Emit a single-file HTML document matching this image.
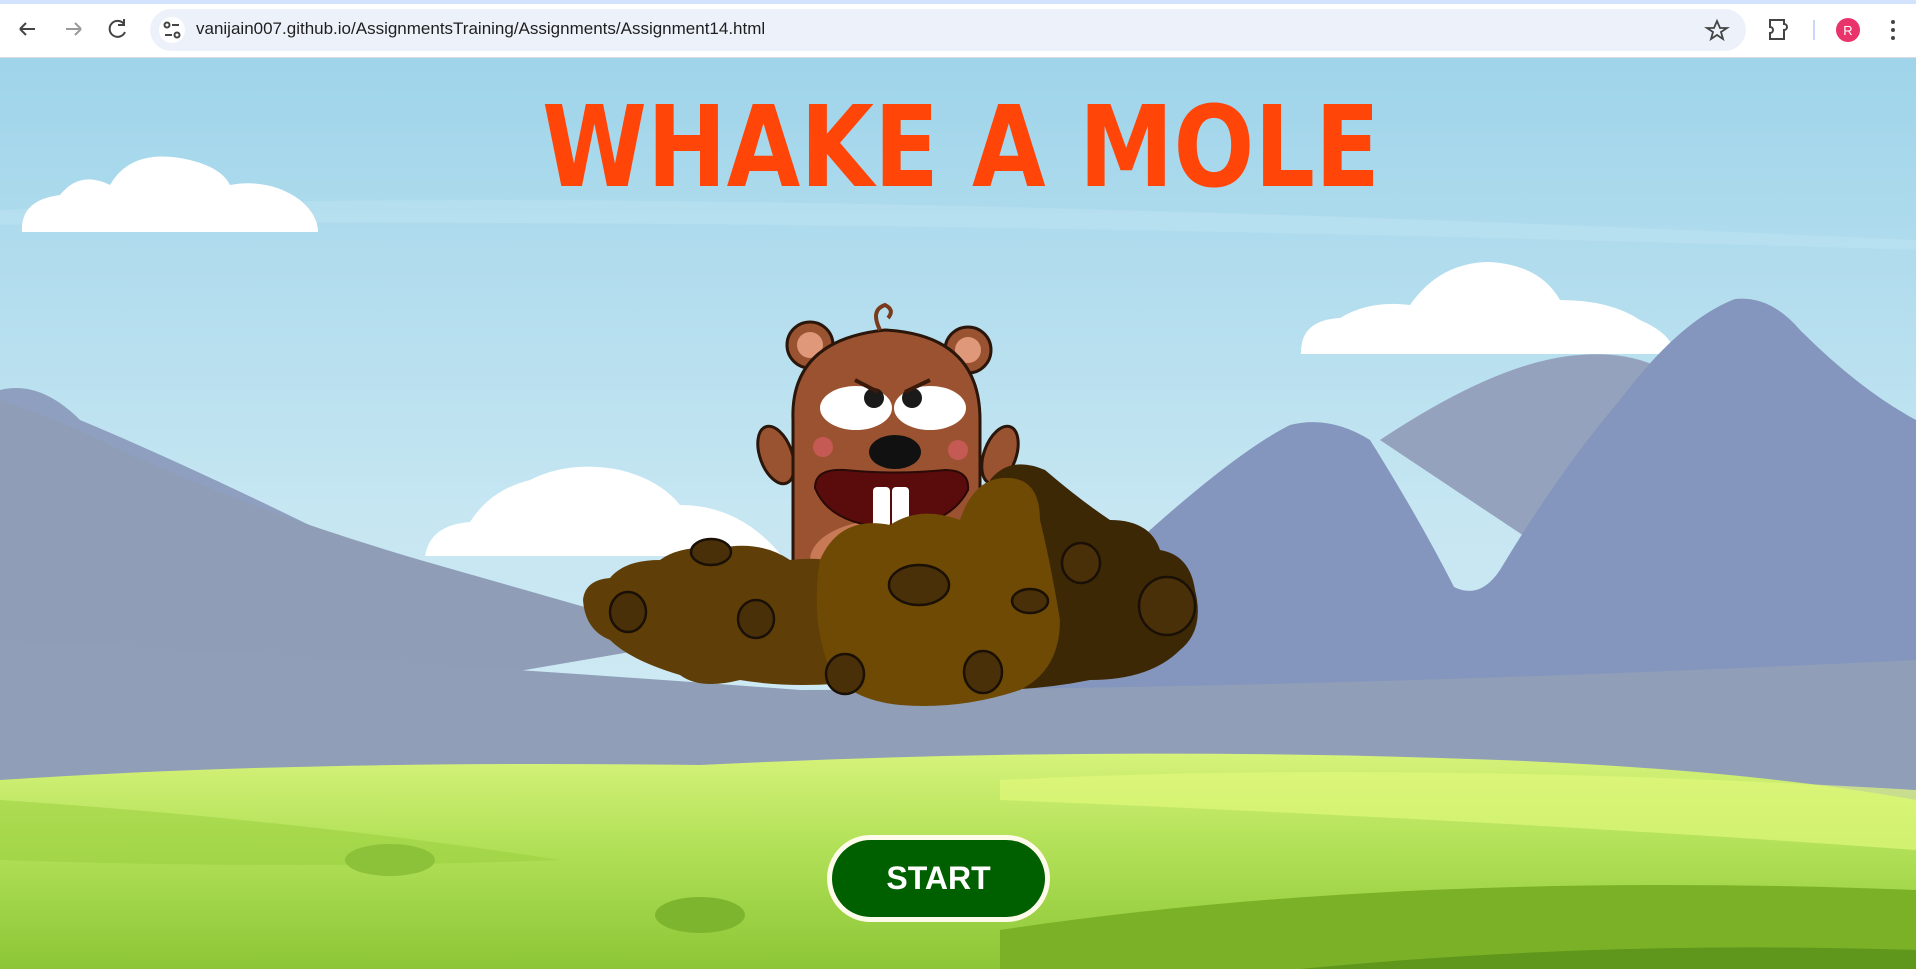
<!DOCTYPE html>
<html><head><meta charset="utf-8"><style>
*{margin:0;padding:0;box-sizing:border-box}
html,body{width:1916px;height:969px;overflow:hidden;font-family:"Liberation Sans",sans-serif;background:#fff}
#bar{position:absolute;left:0;top:0;width:1916px;height:58px;background:#fff;border-bottom:1px solid #dadce0}
#strip{position:absolute;left:0;top:0;width:1916px;height:4px;background:#d3e3fd}
#omni{position:absolute;left:150px;top:9px;width:1596px;height:42px;border-radius:21px;background:#edf2fa}
#url{position:absolute;left:196px;top:19px;font-size:17px;color:#1f1f1f}
#scene{position:absolute;left:0;top:58px}
#btn{position:absolute;left:827px;top:835px;width:223px;height:87px;border:5px solid #fffbea;border-radius:44px;background:#006000;color:#fff;font-weight:bold;font-size:32px;text-align:center;line-height:77px}
</style></head><body>
<div id="bar"><div id="strip"></div>
<svg style="position:absolute;left:0;top:0" width="1916" height="58">
<g stroke="#444" stroke-width="2" fill="none">
<path d="M20 29h15M20 29l6-6M20 29l6 6"/>
<path d="M66 29h15M81 29l-6-6M81 29l-6 6" stroke="#999"/>
<path d="M124 24a8 8 0 1 0 1 8M124 19v6h-6"/>
</g>
</svg>
<div id="omni"></div>
<svg style="position:absolute;left:0;top:0" width="1916" height="58">
<circle cx="172" cy="30" r="13" fill="#fff"/>
<g stroke="#444" stroke-width="2" fill="none"><circle cx="167" cy="25" r="2.5"/><path d="M172 25h7M165 35h7"/><circle cx="177" cy="35" r="2.5"/>
<path d="M1717 21l3 7h7l-6 4 2 7-6-4-6 4 2-7-6-4h7z" stroke-width="1.8"/>
<path d="M1775 20h9v4a3 3 0 0 1 0 6v9h-14v-6a3 3 0 0 0 0-6v-7z"/>
</g>
<line x1="1814" y1="20" x2="1814" y2="40" stroke="#c7d7f5" stroke-width="2"/>
<circle cx="1848" cy="30" r="12" fill="#e8336b"/><text x="1848" y="35" font-size="13" fill="#fff" text-anchor="middle" font-family="Liberation Sans">R</text>
<g fill="#444"><circle cx="1893" cy="22" r="2"/><circle cx="1893" cy="30" r="2"/><circle cx="1893" cy="38" r="2"/></g>
</svg>
<div id="url">vanijain007.github.io/AssignmentsTraining/Assignments/Assignment14.html</div>
</div>
<svg id="scene" width="1916" height="911" viewBox="0 58 1916 911">
<defs>
<linearGradient id="sky" x1="0" y1="0" x2="0" y2="1"><stop offset="0" stop-color="#9fd4ea"/><stop offset=".5" stop-color="#c6e6f2"/><stop offset="1" stop-color="#d6eef6"/></linearGradient>
<linearGradient id="gr" x1="0" y1="0" x2="0" y2="1"><stop offset="0" stop-color="#d6f27a"/><stop offset=".4" stop-color="#b4e25a"/><stop offset="1" stop-color="#8cc636"/></linearGradient>
</defs>
<rect x="0" y="58" width="1916" height="911" fill="url(#sky)"/>
<path d="M0 210 Q600 180 1916 240 L1916 250 Q800 215 0 225Z" fill="#c4e5f2" opacity=".4"/>
<!-- clouds -->
<g fill="#fff">
<path d="M22 232 Q20 200 60 195 Q80 170 110 185 Q130 150 180 158 Q220 165 230 185 Q270 178 300 200 Q318 215 318 232Z"/>
<path d="M1301 354 Q1300 320 1340 318 Q1370 300 1410 305 Q1440 262 1490 262 Q1540 265 1560 300 Q1610 300 1640 320 Q1674 335 1674 354Z"/>
<path d="M425 556 Q430 525 470 522 Q490 490 530 480 Q570 460 620 470 Q660 480 680 505 Q740 505 782 556Z"/>
</g>
<!-- mountains -->
<path d="M0 390 Q40 380 80 420 Q200 470 380 560 Q480 590 600 620 L0 700Z" fill="#8e9fbf"/>
<path d="M0 400 Q60 420 120 450 Q250 510 420 560 Q560 600 700 640 L0 760Z" fill="#8f9db6"/>
<path d="M1380 440 Q1500 360 1580 355 Q1640 350 1680 380 L1560 560Z" fill="#95a2bd"/>
<path d="M1150 530 Q1240 450 1290 425 Q1330 415 1370 440 Q1420 520 1454 587 Q1480 600 1500 570 Q1560 470 1620 400 Q1680 320 1735 299 Q1770 295 1800 330 Q1860 390 1916 420 L1916 800 L900 800Z" fill="#8496bd"/>
<path d="M0 640 Q400 660 800 690 Q1300 690 1916 660 L1916 800 L0 800Z" fill="#909eb8"/>
<!-- grass -->
<path d="M0 780 Q300 760 700 765 Q1100 745 1500 760 Q1750 770 1916 800 L1916 969 L0 969Z" fill="url(#gr)"/>
<path d="M1000 780 Q1400 760 1916 790 L1916 850 Q1500 820 1000 800Z" fill="#e0f87a" opacity=".7"/>
<path d="M0 800 Q300 820 560 860 Q300 870 0 860Z" fill="#98cd3c" opacity=".5"/>
<path d="M1000 930 Q1400 870 1916 890 L1916 969 L1000 969Z" fill="#7ab126"/>
<path d="M1300 969 Q1600 940 1916 950 L1916 969Z" fill="#5f961c"/>
<ellipse cx="390" cy="860" rx="45" ry="16" fill="#8cc23a"/>
<ellipse cx="700" cy="915" rx="45" ry="18" fill="#7db62e"/>
<!-- title -->
<text x="542" y="186" textLength="838" lengthAdjust="spacingAndGlyphs" font-family="DejaVu Sans" font-weight="bold" font-size="112" fill="#ff4508">WHAKE A MOLE</text>
<!-- mole -->
<g stroke="#2a160a" stroke-width="3">
<circle cx="810" cy="345" r="23" fill="#9a5330"/><circle cx="810" cy="345" r="13" fill="#e0987a" stroke="none"/>
<circle cx="968" cy="350" r="23" fill="#9a5330"/><circle cx="968" cy="350" r="13" fill="#e0987a" stroke="none"/>
<ellipse cx="776" cy="455" rx="16" ry="30" fill="#9a5330" transform="rotate(-20 776 455)"/>
<ellipse cx="1000" cy="455" rx="16" ry="30" fill="#9a5330" transform="rotate(20 1000 455)"/>
<path d="M793 420 Q790 340 885 330 Q980 335 980 420 L980 570 Q975 600 940 600 L830 600 Q795 600 793 570Z" fill="#9b5230"/>
</g>
<path d="M880 330 Q870 310 885 305 Q895 310 888 318" stroke="#7a3a1c" stroke-width="4" fill="none"/>
<ellipse cx="885" cy="560" rx="75" ry="40" fill="#c77a55"/>
<ellipse cx="856" cy="408" rx="36" ry="22" fill="#fff"/><ellipse cx="930" cy="408" rx="36" ry="22" fill="#fff"/>
<circle cx="874" cy="398" r="10" fill="#1a1a1a"/><circle cx="912" cy="398" r="10" fill="#1a1a1a"/>
<path d="M855 380 L878 392 M930 380 L905 392" stroke="#3a1a0a" stroke-width="4"/>
<ellipse cx="895" cy="452" rx="26" ry="17" fill="#111"/>
<circle cx="823" cy="447" r="10" fill="#e0606a" opacity=".6"/><circle cx="958" cy="450" r="10" fill="#e0606a" opacity=".6"/>
<path d="M815 488 Q815 468 845 470 Q895 475 945 470 Q970 470 968 490 Q950 525 895 528 Q830 526 815 488Z" fill="#5a0c0c" stroke="#2a0a06" stroke-width="2"/>
<rect x="873" y="487" width="17" height="40" rx="4" fill="#fff"/><rect x="892" y="487" width="17" height="40" rx="4" fill="#fff"/>
<!-- dirt -->
<path d="M990 480 Q1010 455 1045 470 Q1080 500 1110 520 Q1150 520 1160 550 Q1190 555 1195 590 Q1205 630 1180 650 Q1150 680 1090 680 Q1040 690 990 690Z" fill="#3d2806"/>
<path d="M583 600 Q585 580 610 578 Q625 560 660 560 Q680 545 720 548 Q760 540 790 560 Q830 555 860 570 L870 680 Q800 690 740 680 Q700 690 680 675 Q630 660 610 640 Q585 630 583 600Z" fill="#5f3e08"/>
<path d="M820 560 Q840 515 890 525 Q920 505 960 520 Q975 475 1010 478 Q1040 480 1040 520 Q1050 560 1060 620 Q1060 670 1020 690 Q960 710 900 705 Q850 700 830 670 Q810 620 820 560Z" fill="#6e4a04"/>
<g fill="#4a3008" stroke="#1a1006" stroke-width="2.5">
<ellipse cx="711" cy="552" rx="20" ry="13"/><ellipse cx="919" cy="585" rx="30" ry="20"/><ellipse cx="628" cy="612" rx="18" ry="20"/>
<ellipse cx="756" cy="619" rx="18" ry="19"/><ellipse cx="1030" cy="601" rx="18" ry="12"/><ellipse cx="1081" cy="563" rx="19" ry="20"/>
<ellipse cx="1167" cy="606" rx="28" ry="29"/><ellipse cx="845" cy="674" rx="19" ry="20"/><ellipse cx="983" cy="672" rx="19" ry="21"/>
</g>
</svg>
<div id="btn">START</div>
</body></html>
